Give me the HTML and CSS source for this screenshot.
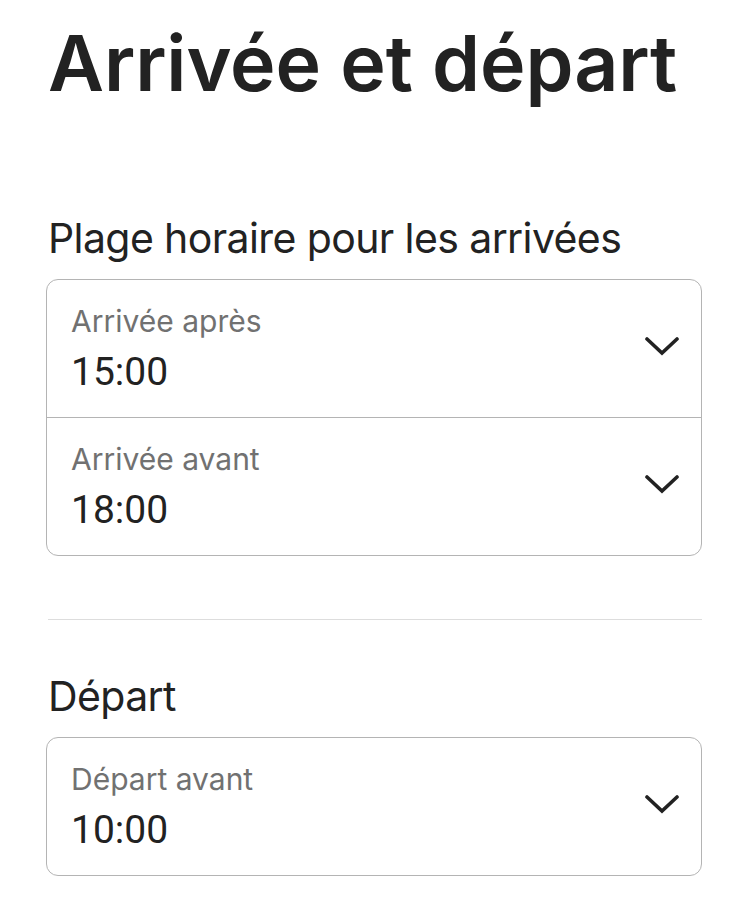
FILE: index.html
```html
<!DOCTYPE html>
<html lang="fr">
<head>
  <meta charset="UTF-8">
  <link rel="stylesheet" href="styles.css">
</head>
<body>
  <div class="page">
    <h1 class="title">Arrivée et départ</h1>

    <!-- Plage horaire arrivées -->
    <section class="group">
      <h2 class="group-title">Plage horaire pour les arrivées</h2>
      <div class="select-box">
        <div class="select-row">
          <div class="select-text">
            <div class="select-label">Arrivée après</div>
            <div class="select-value">15:00</div>
          </div>
          <svg class="chevron" viewBox="0 0 34 20"><path d="M2 3 L17 17 L32 3"/></svg>
        </div>
        <div class="select-row">
          <div class="select-text">
            <div class="select-label">Arrivée avant</div>
            <div class="select-value">18:00</div>
          </div>
          <svg class="chevron" viewBox="0 0 34 20"><path d="M2 3 L17 17 L32 3"/></svg>
        </div>
      </div>
    </section>

    <hr class="separator">

    <!-- Départ -->
    <section class="group group-departure">
      <h2 class="group-title">Départ</h2>
      <div class="select-box">
        <div class="select-row">
          <div class="select-text">
            <div class="select-label">Départ avant</div>
            <div class="select-value">10:00</div>
          </div>
          <svg class="chevron" viewBox="0 0 34 20"><path d="M2 3 L17 17 L32 3"/></svg>
        </div>
      </div>
    </section>
  </div>
</body>
</html>
```

FILE: styles.css
```css
/* base */
body {
  margin: 0;
  background: #fff;
  color: #222;
  font-family: Inter, "Noto Sans", sans-serif;
}
.page {
  padding: 0 47px 0 46px;
}

.title {
  margin: 0;
  padding: 21px 0 0 2px;
  font-size: 77px;
  font-weight: 600;
  line-height: 84px;
  letter-spacing: -0.1px;
}

.group-title {
  margin: 0;
  padding: 109px 0 0 2px;
  font-size: 41px;
  font-weight: 400;
  line-height: 48px;
  letter-spacing: -0.6px;
}
.group-departure .group-title {
  padding-top: 52px;
}

/* select box */
.select-box {
  margin-top: 17px;
  border: 1.5px solid #b4b4b4;
  border-radius: 12px;
}
.select-row {
  display: flex;
  align-items: center;
  height: 137px;
  padding: 0 22px 0 24px;
}
.select-row + .select-row {
  border-top: 1.5px solid #b4b4b4;
}
.select-text {
  flex: 1;
}
.select-label {
  font-size: 30px;
  line-height: 36px;
  color: #717171;
  margin-bottom: 10px;
}
.select-value {
  font-family: Roboto, "Noto Sans", sans-serif;
  font-size: 39px;
  line-height: 46px;
  color: #222;
}
.chevron {
  width: 34px;
  height: 20px;
  margin-top: -6px;
  fill: none;
  stroke: #222;
  stroke-width: 3.6;
  stroke-linecap: round;
}

.separator {
  margin: 63px 0 0 2px;
  border: 0;
  border-top: 1.5px solid #dddddd;
}
```
